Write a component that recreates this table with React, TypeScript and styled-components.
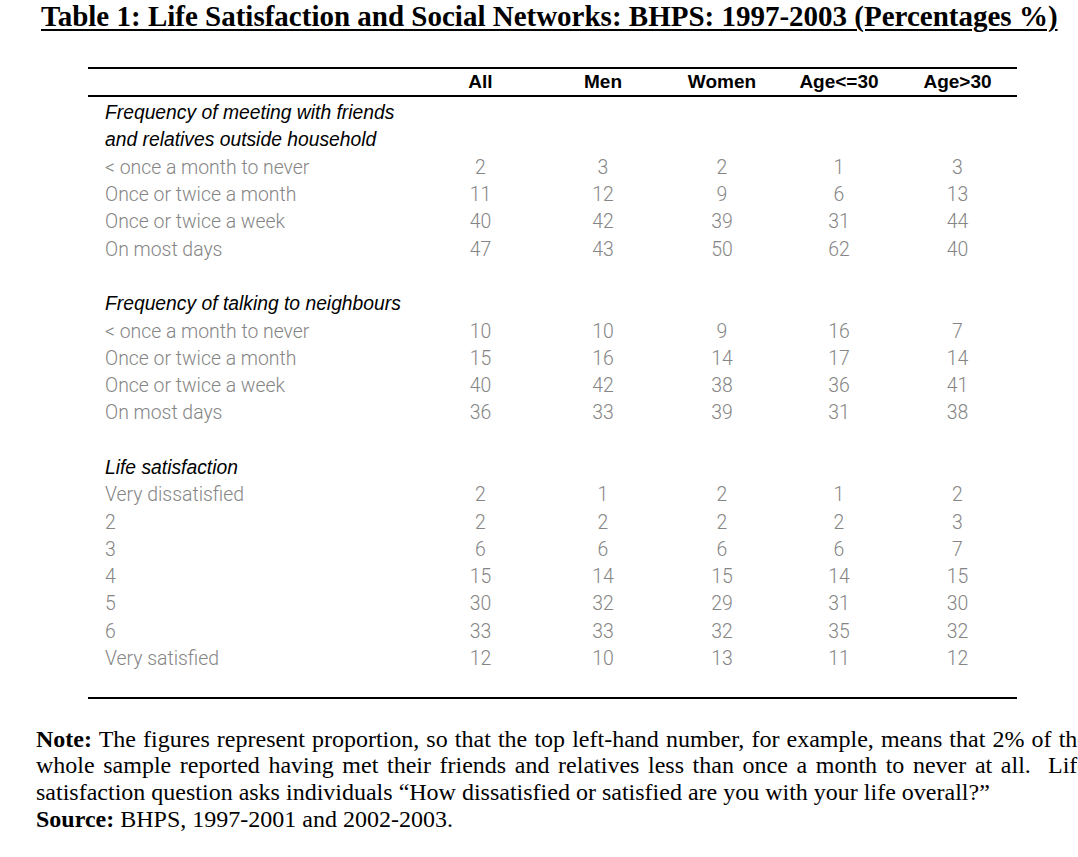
import React from "react";
import styled, { createGlobalStyle } from "styled-components";

const Global = createGlobalStyle`
  html, body { margin: 0; padding: 0; background: #fff; overflow: hidden; }
  #root { width: 1078px; height: 857px; overflow: hidden; }
`;

const Page = styled.div`
  width: 1120px;
  display: flex;
  flex-direction: column;
`;

const Title = styled.h1`
  margin: 0 0 0 41px;
  font-family: "Liberation Serif", "Times New Roman", serif;
  font-weight: bold;
  font-size: 29px;
  line-height: 33px;
  text-decoration: underline;
  text-decoration-thickness: 2px;
  text-underline-offset: 3px;
  white-space: nowrap;
  color: #000;
`;

const Table = styled.div`
  margin: 34px 0 0 88px;
  width: 929px;
  border-top: 2px solid #000;
  border-bottom: 2px solid #000;
  padding-bottom: 24.5px;
`;

const cols = "331px 123px 122px 116px 118px 119px";

const HeaderRow = styled.div`
  display: grid;
  grid-template-columns: ${cols};
  height: 26px;
  align-items: center;
  border-bottom: 2px solid #000;
  margin-bottom: 2px;
`;

const HeadCell = styled.div`
  font-family: "Liberation Sans", Arial, sans-serif;
  font-weight: bold;
  font-size: 19px;
  text-align: center;
  color: #000;
`;

const Row = styled.div`
  display: grid;
  grid-template-columns: ${cols};
  height: 27.3px;
  align-items: center;
`;

const Section = styled.div`
  padding-left: 17px;
  font-family: "Liberation Sans", Arial, sans-serif;
  font-style: italic;
  font-size: 19.3px;
  color: #000;
  white-space: nowrap;
`;

const Label = styled.div`
  padding-left: 17px;
  font-family: Roboto, sans-serif;
  font-weight: 300;
  font-size: 19.4px;
  color: #858585;
  white-space: nowrap;
`;

const Num = styled.div`
  font-family: Roboto, sans-serif;
  font-weight: 300;
  font-size: 19.4px;
  color: #858585;
  text-align: center;
`;

const Notes = styled.div`
  margin: 27px 0 0 36px;
  width: 1052px;
  font-family: "Liberation Serif", "Times New Roman", serif;
  font-size: 24px;
  line-height: 26.7px;
  color: #000;
`;

const Para = styled.p`
  margin: 0;
  text-align: justify;
`;

const Line = styled.p`
  margin: 0;
`;

type DataRow = [string, number[]];

const sections: { title: string[]; rows: DataRow[] }[] = [
  {
    title: ["Frequency of meeting with friends", "and relatives outside household"],
    rows: [
      ["< once a month to never", [2, 3, 2, 1, 3]],
      ["Once or twice a month", [11, 12, 9, 6, 13]],
      ["Once or twice a week", [40, 42, 39, 31, 44]],
      ["On most days", [47, 43, 50, 62, 40]],
    ],
  },
  {
    title: ["Frequency of talking to neighbours"],
    rows: [
      ["< once a month to never", [10, 10, 9, 16, 7]],
      ["Once or twice a month", [15, 16, 14, 17, 14]],
      ["Once or twice a week", [40, 42, 38, 36, 41]],
      ["On most days", [36, 33, 39, 31, 38]],
    ],
  },
  {
    title: ["Life satisfaction"],
    rows: [
      ["Very dissatisfied", [2, 1, 2, 1, 2]],
      ["2", [2, 2, 2, 2, 3]],
      ["3", [6, 6, 6, 6, 7]],
      ["4", [15, 14, 15, 14, 15]],
      ["5", [30, 32, 29, 31, 30]],
      ["6", [33, 33, 32, 35, 32]],
      ["Very satisfied", [12, 10, 13, 11, 12]],
    ],
  },
];

const headers = ["All", "Men", "Women", "Age<=30", "Age>30"];

export default function App() {
  return (
    <>
      <Global />
      <Page>
        <Title>Table 1: Life Satisfaction and Social Networks: BHPS: 1997-2003 (Percentages %)</Title>
        <Table>
          <HeaderRow>
            <div />
            {headers.map((h) => (
              <HeadCell key={h}>{h}</HeadCell>
            ))}
          </HeaderRow>
          {sections.map((s, si) => (
            <React.Fragment key={si}>
              {si > 0 && <Row />}
              {s.title.map((t) => (
                <Row key={t}>
                  <Section>{t}</Section>
                </Row>
              ))}
              {s.rows.map(([label, vals], ri) => (
                <Row key={ri}>
                  <Label>{label}</Label>
                  {vals.map((v, vi) => (
                    <Num key={vi}>{v}</Num>
                  ))}
                </Row>
              ))}
            </React.Fragment>
          ))}
        </Table>
        <Notes>
          <Para>
            <b>Note:</b> The figures represent proportion, so that the top left-hand number, for example, means that 2% of the
            whole sample reported having met their friends and relatives less than once a month to never at all.&nbsp; Life
            satisfaction question asks individuals “How dissatisfied or satisfied are you with your life overall?”
          </Para>
          <Line>
            <b>Source:</b> BHPS, 1997-2001 and 2002-2003.
          </Line>
        </Notes>
      </Page>
    </>
  );
}
